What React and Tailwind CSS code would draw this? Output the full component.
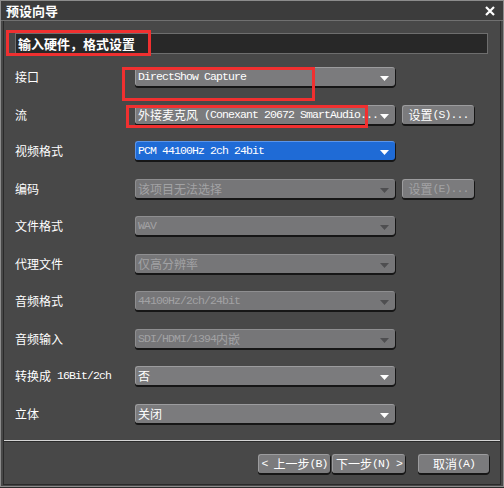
import React from "react";

const CJK = /([\u2E80-\u9FFF\uFF00-\uFFEF\u3000-\u303F]+)/;

// SimSun-like mixed text: CJK runs at 12px, latin runs as narrow mono
function T({ s, cjk = "text-[12px]" }) {
  return s.split(CJK).filter(Boolean).map((part, i) =>
    CJK.test(part) ? (
      <span key={i} className={`${cjk} font-['Noto_Sans_CJK_SC',sans-serif]`}>
        {part}
      </span>
    ) : (
      <span
        key={i}
        className="text-[11.5px] tracking-[-0.9px] font-['Liberation_Mono','Noto_Sans_CJK_SC',monospace] whitespace-pre"
      >
        {part}
      </span>
    )
  );
}

function Arrow({ disabled }) {
  return (
    <svg width="9" height="5" viewBox="0 0 9 5" className="absolute right-[6px] top-[8px]">
      <path d="M0 0H9L4.5 5Z" fill={disabled ? "#4e4e50" : "#ffffff"} />
    </svg>
  );
}

function Select({ value, disabled, active }) {
  const tone = active
    ? "bg-[#1f6bd6] border-[#5b95ea] text-white"
    : disabled
    ? "bg-[#767678] border-[#8e8e90] text-[#a2a2a4]"
    : "bg-[#7b7b7d] border-[#9c9c9e] text-white";
  return (
    <div
      className={`relative w-[260px] h-[19px] rounded-[3px] border-t border-l shadow-[1px_1px_0_#161616,0_2px_0_#161616] flex items-center pl-[2px] pr-[18px] overflow-hidden whitespace-nowrap leading-none ${tone}`}
    >
      <T s={value} />
      <Arrow disabled={disabled} />
    </div>
  );
}

function Btn({ label, disabled, w = "w-[72px]" }) {
  return (
    <div
      className={`${w} h-[19px] rounded-[3px] border-t border-l border-[#9c9c9e] bg-[#7b7b7d] shadow-[1px_1px_0_#161616,0_2px_0_#161616] flex items-center justify-center leading-none whitespace-nowrap ${
        disabled ? "text-[#a2a2a4]" : "text-white"
      }`}
    >
      <T s={label} />
    </div>
  );
}

const rows = [
  { label: "接口", value: "DirectShow Capture", h: "h-[38px]" },
  { label: "流", value: "外接麦克风 (Conexant 20672 SmartAudio...", h: "h-[36px]", btn: "设置(S)..." },
  { label: "视频格式", value: "PCM 44100Hz 2ch 24bit", h: "h-[38px]", active: true },
  { label: "编码", value: "该项目无法选择", h: "h-[37px]", disabled: true, btn: "设置(E)..." },
  { label: "文件格式", value: "WAV", h: "h-[38px]", disabled: true },
  { label: "代理文件", value: "仅高分辨率", h: "h-[37px]", disabled: true },
  { label: "音频格式", value: "44100Hz/2ch/24bit", h: "h-[38px]", disabled: true },
  { label: "音频输入", value: "SDI/HDMI/1394内嵌", h: "h-[37px]", disabled: true },
  { label: "转换成 16Bit/2ch", value: "否", h: "h-[38px]" },
  { label: "立体", value: "关闭", h: "h-[35px]" },
];

export default function App() {
  return (
    <div className="relative w-[504px] h-[488px] bg-[#2c2c2c] text-white select-none">
      <div className="w-[504px] h-[487px] border border-[#8c8c8c] bg-[#484848] flex flex-col">
        {/* title bar */}
        <div className="h-[20px] bg-[#3c3c3c] border-b border-[#707070] flex items-center justify-between px-[5px]">
          <span className="text-[13px] font-bold font-['Noto_Sans_CJK_SC',sans-serif] leading-none">
            预设向导
          </span>
          <svg width="10" height="10" viewBox="0 0 10 10" className="mr-[3px]">
            <path d="M1 1L9 9M9 1L1 9" stroke="#fff" strokeWidth="2.2" />
          </svg>
        </div>

        <div className="flex-1 mx-[2px] mb-[1px] border-l border-r border-b border-[#2a2a2a] flex flex-col">
          {/* section header */}
          <div className="mt-[12px] ml-[11px] mr-[12px] h-[21px] bg-[#282828] border border-[#6e6e6e] flex items-center pl-[2px]">
            <span className="text-[13px] font-bold font-['Noto_Sans_CJK_SC',sans-serif] leading-none">
              输入硬件，格式设置
            </span>
          </div>

          {/* form rows */}
          <div className="mt-[13px] flex flex-col">
            {rows.map((r) => (
              <div key={r.label} className={`${r.h} flex items-start`}>
                <div className="w-[131px] h-[19px] pl-[11px] flex items-center leading-none whitespace-nowrap">
                  <T s={r.label} />
                </div>
                <Select value={r.value} disabled={r.disabled} active={r.active} />
                {r.btn && (
                  <div className="ml-[7px]">
                    <Btn label={r.btn} disabled={r.disabled} />
                  </div>
                )}
              </div>
            ))}
          </div>

          {/* separator */}
          <div className="mt-[1px] h-[2px] bg-[#d4d4d4] border-b border-[#2a2a2a]" />

          {/* footer buttons */}
          <div className="mt-[12px] flex items-start pl-[254px]">
            <Btn label="< 上一步(B)" w="w-[72px]" />
            <div className="ml-[2px]">
              <Btn label="下一步(N) >" w="w-[73px]" />
            </div>
            <div className="ml-[13px]">
              <Btn label="取消(A)" w="w-[71px]" />
            </div>
          </div>
        </div>
      </div>

      {/* red annotation boxes */}
      <div className="absolute left-[6px] top-[30px] w-[145px] h-[26px] border-[3px] border-[#f03030]" />
      <div className="absolute left-[122px] top-[67px] w-[193px] h-[34px] border-[3px] border-[#f03030]" />
      <div className="absolute left-[126px] top-[105px] w-[242px] h-[23px] border-[3px] border-[#f03030]" />
    </div>
  );
}
